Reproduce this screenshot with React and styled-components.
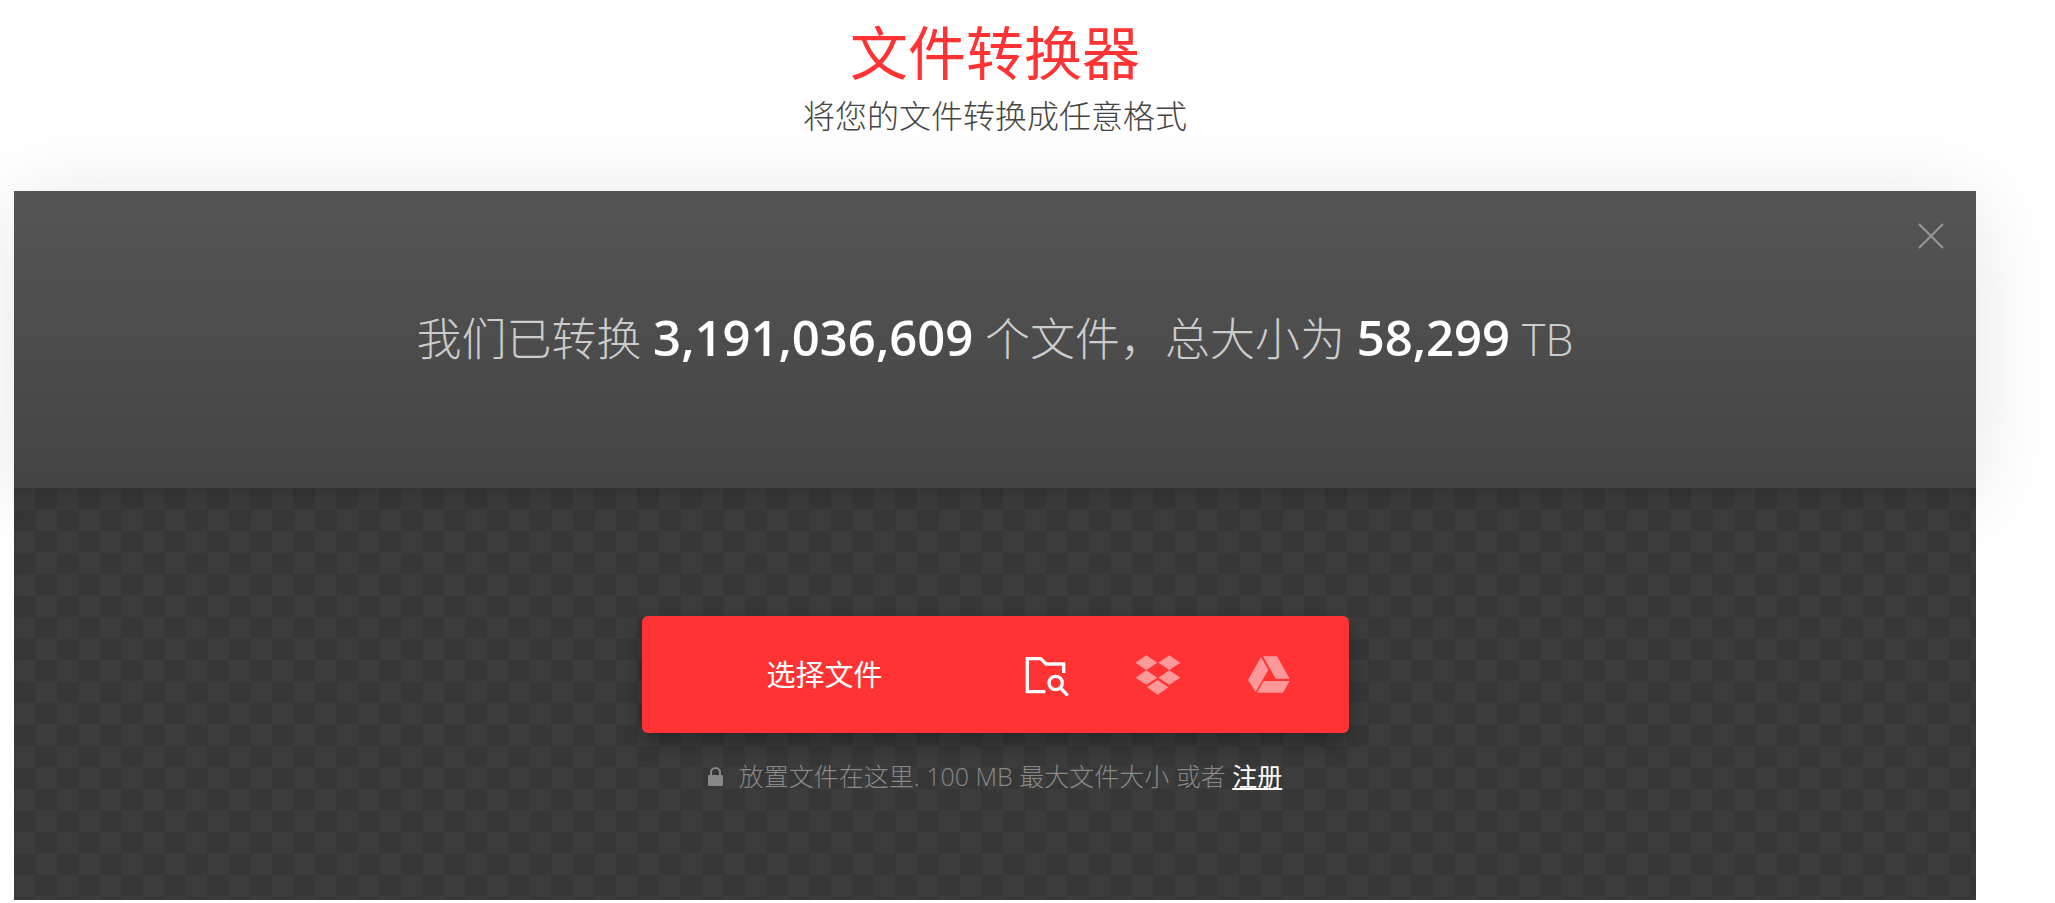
import React, { useState } from 'react';
import styled, { createGlobalStyle } from 'styled-components';

const GlobalStyle = createGlobalStyle`
  * {
    box-sizing: border-box;
  }
  body {
    margin: 0;
    background: #fff;
    font-family: 'Open Sans', 'Noto Sans CJK SC', sans-serif;
    font-weight: 300;
    overflow-x: hidden;
  }
`;

const Page = styled.div`
  padding: 15px 79px 0 14px;
`;

const Header = styled.header`
  height: 176px;
  text-align: center;
`;

const Title = styled.h1`
  margin: 0;
  font-size: 58px;
  font-weight: 400;
  line-height: 76px;
  color: #ff3333;
`;

const Subtitle = styled.p`
  margin: 0;
  font-size: 32px;
  line-height: 50px;
  color: #444;
`;

const Banner = styled.section`
  position: relative;
  display: flex;
  align-items: center;
  justify-content: center;
  height: 297px;
  padding-bottom: 4px;
  background: linear-gradient(#555, #444);
  box-shadow: 0 8px 80px rgba(0, 0, 0, 0.1);
`;

const Stats = styled.p`
  margin: 0;
  font-size: 45px;
  line-height: 60px;
  color: #ccc;
`;

const Count = styled.strong`
  font-size: 49px;
  font-weight: 600;
  color: #fff;
`;

const Close = styled.button`
  position: absolute;
  top: 32px;
  right: 32px;
  display: flex;
  padding: 0;
  border: 0;
  background: none;
  color: #999;
  cursor: pointer;
`;

const DropZone = styled.section`
  position: relative;
  display: flex;
  flex-direction: column;
  align-items: center;
  height: 412px;
  padding-top: 128px;
  background: repeating-conic-gradient(#373737 0 25%, #3c3c3c 0 50%) 0 0 / 43px 43px;
  box-shadow: inset 0 24px 24px -16px rgba(0, 0, 0, 0.15);
`;

const Picker = styled.div`
  display: flex;
  width: 707px;
  max-width: 100%;
  height: 117px;
  padding: 0 24px 0 16px;
  border-radius: 6px;
  background: #ff3333;
  box-shadow: 0 10px 20px rgba(0, 0, 0, 0.3);
`;

const PickButton = styled.button`
  flex: 1;
  padding: 0 0 4px;
  border: 0;
  background: none;
  font-family: inherit;
  font-size: 29px;
  font-weight: 400;
  color: #fff;
  cursor: pointer;
`;

const SourceButton = styled.button`
  display: flex;
  align-items: center;
  justify-content: center;
  width: 111px;
  padding: 0;
  border: 0;
  background: none;
  color: ${({ $active }) => ($active ? '#fff' : '#ff9999')};
  cursor: pointer;
  &:hover {
    color: #fff;
  }
`;

const Hint = styled.p`
  display: flex;
  align-items: center;
  gap: 16px;
  margin: 24px 0 0;
  font-size: 25px;
  line-height: 38px;
  color: #888;
`;

const SignUp = styled.a`
  font-weight: 400;
  color: #fff;
  text-decoration: underline;
`;

const CloseIcon = () => (
  <svg width="26" height="26" viewBox="0 0 26 26" stroke="currentColor" strokeWidth="2">
    <path d="M1 1L25 25M25 1L1 25" />
  </svg>
);

const FolderIcon = () => (
  <svg width="45" height="42" viewBox="75 164 135 126" fill="none" stroke="currentColor" strokeWidth="10">
    <path d="M191 221V194H138L122 178H82V277H136" />
    <circle cx="167" cy="251" r="20" />
    <path d="M181 265L203 289" />
  </svg>
);

const DropboxIcon = () => (
  <svg width="46" height="40" viewBox="403 167 138 120" fill="currentColor">
    <path d="M437 168L470 190L437 212L404 190Z" />
    <path d="M506 168L539 190L506 212L473 190Z" />
    <path d="M437 213L470 235L437 256L404 235Z" />
    <path d="M506 213L539 235L506 256L473 235Z" />
    <path d="M471 242L503 264L471 286L439 264Z" />
  </svg>
);

const DriveIcon = () => (
  <svg width="42" height="37" viewBox="743 166 126 111" fill="currentColor">
    <path d="M782 169L804 207L766 274L743 238Z" />
    <path d="M788 167H830L868 234H826Z" />
    <path d="M790 241H868L848 276H770Z" />
  </svg>
);

const LockIcon = () => (
  <svg width="15" height="19" viewBox="0 0 15 19">
    <rect y="8" width="15" height="11" rx="1" fill="currentColor" />
    <path d="M3 9V5.500a4.500 4.500 0 0 1 9 0V9" fill="none" stroke="currentColor" strokeWidth="2" />
  </svg>
);

const sources = [
  { id: 'folder', label: '文件夹', Icon: FolderIcon },
  { id: 'dropbox', label: 'Dropbox', Icon: DropboxIcon },
  { id: 'drive', label: 'Google Drive', Icon: DriveIcon },
];

const App = () => {
  const [source, setSource] = useState('folder');
  return (
    <>
      <GlobalStyle />
      <Page>
        <Header>
          <Title>文件转换器</Title>
          <Subtitle>将您的文件转换成任意格式</Subtitle>
        </Header>
        <Banner>
          <Stats>
            我们已转换 <Count>3,191,036,609</Count> 个文件，总大小为 <Count>58,299</Count> TB
          </Stats>
          <Close type="button" aria-label="关闭">
            <CloseIcon />
          </Close>
        </Banner>
        <DropZone>
          <Picker>
            <PickButton type="button">选择文件</PickButton>
            {sources.map(({ id, label, Icon }) => (
              <SourceButton
                key={id}
                type="button"
                aria-label={label}
                $active={source === id}
                onClick={() => setSource(id)}
              >
                <Icon />
              </SourceButton>
            ))}
          </Picker>
          <Hint>
            <LockIcon />
            <span>
              放置文件在这里. 100 MB 最大文件大小 或者 <SignUp href="#signup">注册</SignUp>
            </span>
          </Hint>
        </DropZone>
      </Page>
    </>
  );
};

export default App;
